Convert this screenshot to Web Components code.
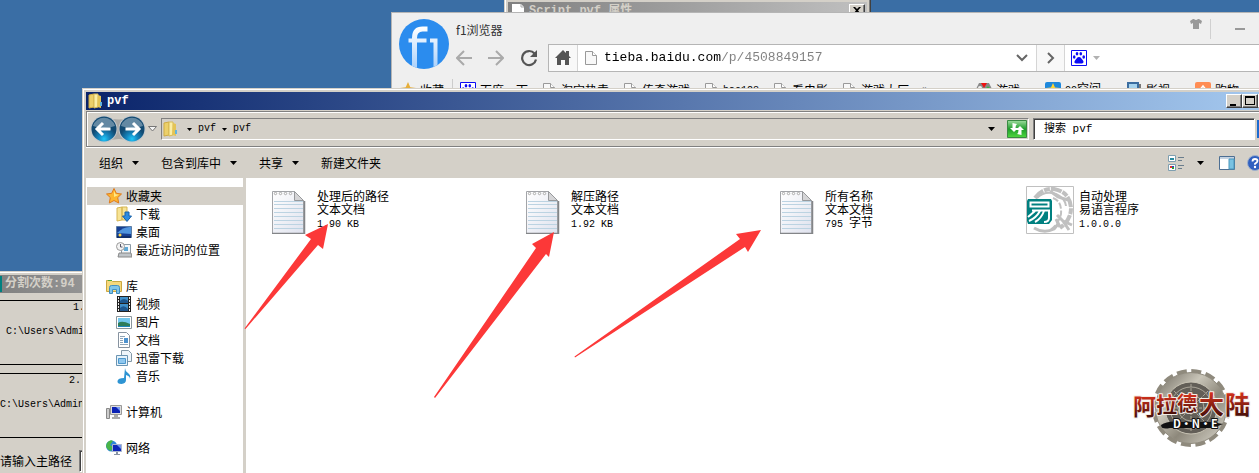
<!DOCTYPE html>
<html lang="zh-CN">
<head>
<meta charset="utf-8">
<title>pvf</title>
<style>
  html, body { height: 100%; margin: 0; }
  body {
    --face: #d4d0c8;
    --mono: "Liberation Mono", "Noto Sans CJK SC", monospace;
    overflow: hidden;
    font: 12px/18px "Noto Sans CJK SC", sans-serif;
    color: #000;
  }
</style>
</head>
<body>
<desk-top></desk-top>

<script>
const page = '<path d="M2.5 1.5h7l4 4v9h-11z" fill="#f8f8f8" stroke="#999"/><path d="M9.5 1.5v4h4" fill="#fff" stroke="#999"/>';

// every icon: [viewBox width, viewBox height, svg markup]
const ICONS = {
  page: [16, 16, page],
  script: [16, 16, '<path d="M2 1h9l3 3v11H2z" fill="#fff"/><path d="M11 1v3h3" fill="none" stroke="#aaa"/>'],
  f1: [50, 50, `<defs><linearGradient id="w" gradientUnits="userSpaceOnUse" x1="0" y1="8" x2="0" y2="50"><stop offset="0" stop-color="#fff"/><stop offset="1" stop-color="#a9d0fb"/></linearGradient><clipPath id="c"><circle cx="25" cy="25" r="25"/></clipPath></defs>
    <circle cx="25" cy="25" r="25" fill="#2b8cee"/><g clip-path="url(#c)" fill="none" stroke="url(#w)" stroke-width="5"><path d="M15.500 50V19q0-9 8-9h5"/><path d="M9.500 21.500h18M31 21.500h5.500V50" stroke-width="4"/></g>`],
  back: [16, 16, '<path d="M8 1 1 8l7 7M1 8h15" fill="none" stroke="#aaa" stroke-width="2"/>'],
  forward: [16, 16, '<path d="m8 1 7 7-7 7M15 8H0" fill="none" stroke="#aaa" stroke-width="2"/>'],
  reload: [18, 18, '<path d="M14.500 4.500a7 7 0 1 0 1.500 6" fill="none" stroke="#555" stroke-width="2.200"/><path d="M17 1v7h-7z" fill="#555"/>'],
  home: [16, 16, '<path d="M8 0 0 8h2v7h4v-5h4v5h4V8h2l-2-2V1h-3v2z" fill="#555"/>'],
  down: [12, 8, '<path d="m1 1 5 5 5-5" fill="none" stroke="#666" stroke-width="2"/>'],
  right: [8, 12, '<path d="m1 1 5 5-5 5" fill="none" stroke="#666" stroke-width="2"/>'],
  shirt: [12, 10, '<path d="M0 2 3 0h1q2 2 4 0h1l3 2-1 3-2-1v6H3V4L1 5z" fill="#999"/>'],
  line: [10, 2, '<path d="M0 0h10v2H0z" fill="#999"/>'],
  baidu: [16, 16, '<path d="M.500.500h15v15H.500z" fill="#fff" stroke="#0b0bf5"/><path d="M8 7c2 0 2.500 2 4 3.500 1.500 2-.5 3.500-2 3H6c-2 .5-3.500-1-2-3C5.500 9 6 7 8 7z" fill="#0b0bf5"/><g fill="#0b0bf5"><ellipse cx="3.200" cy="7" rx="1.300" ry="1.700"/><ellipse cx="6" cy="3.800" rx="1.300" ry="1.800"/><ellipse cx="9.800" cy="3.800" rx="1.300" ry="1.800"/><ellipse cx="12.700" cy="7" rx="1.300" ry="1.700"/></g>'],
  star: [16, 16, '<path d="m8 .5 2.300 4.800 5.200.7-3.800 3.600 1 5.400L8 12.500 3.300 15l1-5.400L.500 6l5.200-.7z" fill="#fdb62f" stroke="#e07b1c"/><path d="m8 3 1.500 3.300 3.500.5L8 9z" fill="#ffe98a"/>'],
  goldstar: [16, 16, '<path d="m8 0 2.300 5.300 5.700.7-4.300 3.600 1.300 5.900-5-3-5 3 1.300-5.900L0 6l5.700-.7z" fill="#e6ae3a"/>'],
  game: [16, 16, '<path d="M3 1h10l3 6v7l-4-3H4l-4 3V7z" fill="#888"/><path d="M5 1h6L8 6z" fill="#e11"/><circle cx="4" cy="6" r="2" fill="#eee"/><circle cx="12" cy="6" r="1.500" fill="#3b4"/>'],
  qq: [16, 16, '<rect width="16" height="16" rx="2" fill="#1e88dc"/><path d="m8 1 2 4.500 5 .5-4 3 1 5-4-2.500L4 14l1-5-4-3 5-.5z" fill="#ffd633"/>'],
  film: [16, 16, '<path d="M1 0h12v15H1z" fill="#3b6da0"/><path d="M3 2h8v9H3z" fill="#a6d3ee"/><path d="M13 2h2v13h-2z" fill="#777"/>'],
  shop: [16, 16, '<rect width="16" height="16" rx="2" fill="#ff8d54"/><path d="m4 9 4-5 4 5v4H4z" fill="none" stroke="#fff" stroke-width="1.500"/>'],
  folder: [16, 16, '<path d="m1 2 5-1v13l-5 1z" fill="#ecd06a" stroke="#d0ad45"/><path d="M6 1h4v13l-4 1z" fill="#fbeea6" stroke="#d8bb56"/><path d="m10 2 3 1v12l-4-1z" fill="#e4c456"/><path d="M12 9h2v4h-2z" fill="#61b4df"/>'],
  tri: [7, 4, '<path d="M0 0h7L3.500 4z"/>'],
  smalltri: [5, 3, '<path d="M0 0h5L2.500 3z"/>'],
  history: [9, 6, '<path d="M.5.500h8L4.500 5z" fill="#f4f4f4" stroke="#777"/>'],
  orbs: [58, 28, `<defs><radialGradient id="o" cy=".9"><stop offset="0" stop-color="#20c8fa"/><stop offset=".45" stop-color="#1585bd"/><stop offset="1" stop-color="#124a72"/></radialGradient></defs>
    <path d="M14 2q15 5 30 0v25q-15-6-30 0z" fill="#aaa9a6"/><circle cx="14" cy="14" r="13.500" fill="#c5c8cb"/><circle cx="42" cy="14" r="13.500" fill="#c5c8cb"/><circle cx="14" cy="14" r="12.500" fill="url(#o)"/><circle cx="42" cy="14" r="12.500" fill="url(#o)"/>
    <path d="M3 11a11.500 11.500 0 0 1 22 0q-11 4-22 0zM31 11a11.500 11.500 0 0 1 22 0q-11 4-22 0z" fill="#fff" opacity=".35"/>
    <path d="m13 8-6 6 6 6M7 14h13.500M43 8l6 6-6 6m6-6H35.500" fill="none" stroke="#fff" stroke-width="3"/>`],
  refresh: [20, 18, '<defs><linearGradient id="g" x1="0" y1="0" x2="0" y2="1"><stop offset="0" stop-color="#9fdc9f"/><stop offset=".5" stop-color="#1f9d2b"/><stop offset="1" stop-color="#4fd83f"/></linearGradient></defs><path d="M.5.500h19v17H.500z" fill="url(#g)" stroke="#3a8a43"/><path d="M5.500 3v5H3l4 4 4-4H8.500q0-3 1.500-4zM14.500 15v-5H17l-4-4-4 4h2.500q0 3-1.500 4z" fill="#fff"/>'],
  search: [16, 18, '<path d="M0 0h16v18H0z" fill="#1c6bd0"/>'],
  view: [16, 16, '<g fill="#fff" stroke="#7f9fb0"><path d="M.5.500h7v6h-7zM.5 9.500h7v6h-7z"/></g><path d="M2 3h4v2H2z" fill="#2a8ba0"/><path d="M2 11h2v2H2z" fill="#d33"/><path d="M4 12h2v2H4z" fill="#2a9a3a"/><path d="M4 11h2v1H4z" fill="#33c"/><path d="M10 2.500h6M10 5.500h4M10 10.500h6M10 13.500h4" stroke="#6a7d8c"/>'],
  pane: [16, 14, '<path d="M.5.500h15v13H.500z" fill="#fff" stroke="#4d6f93"/><path d="M1 1h14v2H1z" fill="#c5d3e2"/><path d="M10 3h5v10h-5z" fill="#79c2e2" stroke="#4a97bc"/>'],
  help: [16, 16, '<circle cx="8" cy="8" r="7.500" fill="#3060c0" stroke="#9fb0cc"/><path d="M5.500 6.500q0-2.500 2.500-2.500t2.500 2q0 1.300-2.500 2.700v1" fill="none" stroke="#fff" stroke-width="1.800"/><circle cx="8" cy="12" r="1.200" fill="#fff"/>'],
  downloads: [16, 16, '<path d="m1 2 5-1v13l-5 1zM6 1h5v13H6z" fill="#f7e394" stroke="#d5b552"/><path d="M9 6h4v4h2.500L11 15.500 6.500 10H9z" fill="#2c8be0" stroke="#1660a8"/>'],
  desktop: [16, 16, '<path d="M.5 2.500h15v11H.500z" fill="#173f92" stroke="#5c7da4"/><path d="M1 9q7-7 14-6v7z" fill="#4f94dd"/><path d="M1 12h14v2H1z" fill="#102f6b"/><circle cx="4" cy="11" r="1.500" fill="#ffd84a"/>'],
  recent: [16, 16, '<path d="M5.500 2.500h9v9h-9z" fill="#f3f7fa" stroke="#8d9aa4"/><path d="M8 5h4v4H8z" fill="#5fa9d6"/><path d="m3 11 12 0 1 4H2z" fill="#bfc4c8" stroke="#888"/><circle cx="4.500" cy="4.500" r="4" fill="#f3f3f3" stroke="#999"/><path d="M4.500 2v3h2" fill="none" stroke="#556"/>'],
  library: [16, 16, '<path d="M.5 2.500h5l1 1h9v10H.500z" fill="#f5d97c" stroke="#cba741"/><path d="M2 2h4v1H2z" fill="#4fa83b"/><path d="M3.500 15.500v-6q0-2 2-2h6q2 0 2 2v6h-3v-4h-4v4z" fill="#7fc5ea" stroke="#438fc0"/>'],
  video: [16, 16, '<path d="M1 0h14v16H1z" fill="#222"/><path d="M4 1h8v6H4zM4 8h8v7H4z" fill="#3f8fca"/><path d="M4 5q4-4 8 0v2H4zM4 12q4-4 8 1v2H4z" fill="#1d568e"/><path d="M2.500 1v15M13.500 1v15" stroke="#eee" stroke-dasharray="2 1"/>'],
  picture: [16, 16, '<path d="M.5 2.500h15v12H.500z" fill="#fff" stroke="#8a969c"/><path d="M2 4h12v9H2z" fill="#73c8ee"/><path d="M2 9q4-3 12 1v3H2z" fill="#2e7d5b"/><path d="M2 12h12v1H2z" fill="#1d86bd"/>'],
  doc: [16, 16, '<path d="M2.500.500h8l3 3v12h-11z" fill="#fff" stroke="#8793a0"/><path d="M4 4.500h5M4 6.500h3M4 8.500h3M4 10.500h3M4 12.500h8" stroke="#8fa5b8"/><path d="M8 6h4v5H8z" fill="#4d92cf"/>'],
  thunder: [16, 16, '<path d="M5.500.500h7l3 3v8h-10z" fill="#eef5fa" stroke="#8398a7"/><path d="M.5 5.500h11v10H.500z" fill="#e6f3fb" stroke="#6b94b2"/><path d="M2.500 8.500h7v5h-7z" fill="#8ec7ef" stroke="#4c97cc"/>'],
  music: [16, 16, '<path d="M9 0q0 3 3 5t2 6q0-3-4-4v5q0 3.500-4.500 4Q1 16 1.500 13T8 10z" fill="#2e94d3"/>'],
  computer: [16, 16, '<path d="M.5 4.500h3v10h-3z" fill="#ccc" stroke="#888"/><path d="M4.500 1.500h11v9h-11z" fill="#ddd" stroke="#999"/><path d="M6 3h8v6H6z" fill="#0b22b5"/><path d="M10 3h4v4z" fill="#7b9cf2"/><path d="M8 11h4v2h2v2H6v-2h2z" fill="#aaa"/>'],
  network: [16, 16, '<circle cx="5.500" cy="6" r="5.500" fill="#2d86d9"/><path d="M1 3q3-4 6-2L4 5l3 2-2 4Q1 10 0 6z" fill="#4ab548"/><path d="M6.500 4.500h9v7h-9z" fill="#0d27b8" stroke="#a8b4cc"/><path d="M11 5h4v4z" fill="#6f93ee"/><path d="M10 12h2v2h2v1H8v-1h2z" fill="#8894a4"/>'],
  notepad: [48, 48, `<defs><linearGradient id="n" x1="0" y1="0" x2="1" y2="1"><stop offset="0" stop-color="#fff"/><stop offset="1" stop-color="#dfe2ee"/></linearGradient></defs>
    <path d="M8.500 5.500h22l9 9v33h-31z" fill="url(#n)" stroke="#a2a4a8"/><path d="M8 47.500h32.500V15" fill="none" stroke="#838588" stroke-width="1.500"/>
    <path d="M10 15.500h29M10 18.500h29M10 22.500h29M10 26.500h29M10 30.500h29M10 34.500h29M10 38.500h29M10 42.500h29" stroke="#bcd3e2"/>
    <path d="M30.500 5.500v9h9z" fill="#d5d5d7" stroke="#97999c"/><g fill="#fff" stroke="#aaa"><circle cx="11.500" cy="7.500" r="1.200"/><circle cx="16.500" cy="7.500" r="1.200"/><circle cx="21.500" cy="7.500" r="1.200"/><circle cx="26.500" cy="7.500" r="1.200"/></g>`],
  yi: [48, 48, `<path d="M.5.500h47v47H.500z" fill="#fff" stroke="#c0c0c0"/>
    <g fill="none" stroke="#c0c0c0"><path d="M9 12Q16 2 28 3q16 3 17 19 0 12-11 20" stroke-width="4" stroke-dasharray="11 1 6 1"/><path d="M11 12q8-8 19-4 9 4 10 12" stroke-width="2"/><path d="M27 12q9 3 8 16-3 11-11 16" stroke-width="2" stroke-dasharray="6 2"/><path d="M8 42q10 6 20 1l5-6M31 29l6 6 9 4M24 5l8 6 10 3M37 35l6 9M30 33l4 8" stroke-width="3"/></g>
    <path d="M2 13h23l1 2v19l-3 4H2l-1-3V15z" fill="#008080"/><path d="M4.500 16.500h18v4h-18zM6 24.500h18M9 25l-7 6M14 25q-4 7-11 10M18 25q-3 8-9 11M23 25v7q0 4-5 4" fill="none" stroke="#fff" stroke-width="2"/>`],
};

class UiIcon extends HTMLElement {
  connectedCallback() {
    this.attachShadow({ mode: 'open' });
    const [w, h, art] = ICONS[this.getAttribute('name')];
    this.shadowRoot.innerHTML = `
      <style>
        :host { display: inline-flex; flex: none; }
        svg { display: block; }
      </style>
      <svg width="${w}" height="${h}" viewBox="0 0 ${w} ${h}" aria-hidden="true">${art}</svg>`;
  }
}

// Small raised caption button
class CaptionButton extends HTMLElement {
  connectedCallback() {
    this.attachShadow({ mode: 'open' });
    const marks = {
      min: '<path d="M3 9h6v2H3z"/>',
      max: '<path d="M2 1h10v9H2zM3 3v6h8V3z" fill-rule="evenodd"/>',
      close: '<path d="M3 2h2l2 2 2-2h2L8 5.500 11 9H9L7 7 5 9H3l3-3.500z"/>',
    };
    const kind = this.getAttribute('kind');
    this.shadowRoot.innerHTML = `
      <style>
        :host { display: block; flex: none; }
        button {
          display: block; width: 16px; height: 14px; padding: 0;
          background: var(--face);
          border: 1px solid; border-color: #fff #404040 #404040 #fff;
          box-shadow: inset -1px -1px #808080;
        }
        svg { display: block; }
      </style>
      <button aria-label="${kind}"><svg width="14" height="12">${marks[kind]}</svg></button>`;
  }
}

// Classic window frame: caption on top, slotted body below
class ClassicWindow extends HTMLElement {
  connectedCallback() {
    this.attachShadow({ mode: 'open' });
    this.shadowRoot.innerHTML = `
      <style>
        :host {
          --from: #808080; --to: #c0c0c0; --caption: #d4d0c8;
          display: flex; flex-direction: column; box-sizing: border-box;
          padding: 3px; background: var(--face);
          border: 1px solid; border-color: var(--face) #404040 #404040 var(--face);
          box-shadow: inset 1px 1px #fff, inset -1px -1px #808080;
        }
        :host([active]) { --from: #0a246a; --to: #a6caf0; --caption: #fff; }
        header {
          display: flex; align-items: center; gap: 3px; flex: none;
          height: 18px; padding: 0 2px;
          background: linear-gradient(to right, var(--from), var(--to));
          color: var(--caption); font: bold 12px/18px var(--mono);
        }
        h1 { flex: 1; margin: 0; font: inherit; white-space: nowrap; }
        .buttons { display: flex; }
      </style>
      <header><slot name="icon"></slot><h1>${this.getAttribute('caption')}</h1><div class="buttons"><slot name="buttons"></slot></div></header>
      <slot></slot>`;
  }
}

class WebBrowser extends HTMLElement {
  connectedCallback() {
    this.attachShadow({ mode: 'open' });
    const mark = ([icon, text]) => `<a href="#"><ui-icon name="${icon}"></ui-icon><span>${text}</span></a>`;
    const left = [['baidu', '百度一下'], ['page', '淘宝热卖'], ['page', '传奇游戏'], ['page', '<i>hao123</i>'], ['page', '看电影'], ['page', '游戏大厅']];
    const right = [['game', '游戏'], ['qq', '<i>QQ</i>空间'], ['film', '影视'], ['shop', '购物']];
    this.shadowRoot.innerHTML = `
      <style>
        :host { display: block; background: #efefef; border: 1px solid #b5b5b5; box-sizing: border-box; }
        button { display: flex; align-items: center; justify-content: center; padding: 0; border: 0; background: none; }
        .top { display: flex; gap: 7px; padding: 6px 0 0 7px; }
        .main { flex: 1; display: flex; flex-direction: column; }
        .title { display: flex; align-items: flex-start; height: 25px; color: #333; }
        .title span { flex: 1; padding-top: 2px; }
        .title .min { margin-left: 8px; padding: 0 33px 0 24px; height: 20px; border-left: 1px solid #d0d0d0; box-sizing: border-box; }
        .nav { display: flex; align-items: center; }
        .arrows { display: flex; align-items: center; gap: 16px; width: 92px; }
        .address { flex: 1; display: flex; height: 28px; box-sizing: border-box; border: 1px solid #b5b5b5; background: #fff; }
        .address > button { width: 29px; background: #f8f8f8; border: 0 solid #d5d5d5; }
        .address .home { border-right-width: 1px; }
        .address .go { border-width: 0 1px; }
        label { flex: 1; display: flex; align-items: center; gap: 5px; padding: 0 8px 0 5px; }
        input {
          flex: 1; min-width: 0; height: 24px; padding: 0; border: 0; outline: 0;
          font: 13px/24px var(--mono); color: #808080;
          background: linear-gradient(to right, #000 15ch, #808080 15ch);
          -webkit-background-clip: text; background-clip: text; -webkit-text-fill-color: transparent;
        }
        .engine { display: flex; align-items: center; gap: 6px; width: 206px; padding-left: 6px; }
        .engine ui-icon + ui-icon { opacity: .3; }
        .marks { display: flex; gap: 13px; padding: 7px 39px 0 8px; line-height: 18px; }
        .marks a { display: flex; align-items: center; gap: 4px; color: #000; text-decoration: none; white-space: nowrap; }
        .marks .fav { padding-right: 8px; border-right: 1px solid #ccc; margin-right: -6px; }
        .marks .more { flex: 1; color: #666; }
        .right { display: flex; gap: 25px; }
        i { font: 10px/18px var(--mono); }
      </style>
      <div class="top">
        <ui-icon name="f1"></ui-icon>
        <div class="main">
          <div class="title">
            <span>f1浏览器</span>
            <button aria-label="皮肤"><ui-icon name="shirt"></ui-icon></button>
            <button class="min" aria-label="最小化"><ui-icon name="line"></ui-icon></button>
          </div>
          <div class="nav">
            <div class="arrows">
              <button aria-label="后退"><ui-icon name="back"></ui-icon></button>
              <button aria-label="前进"><ui-icon name="forward"></ui-icon></button>
              <button aria-label="刷新"><ui-icon name="reload"></ui-icon></button>
            </div>
            <div class="address">
              <button class="home" aria-label="主页"><ui-icon name="home"></ui-icon></button>
              <label><ui-icon name="page"></ui-icon><input aria-label="地址" value="tieba.baidu.com/p/4508849157"><ui-icon name="down"></ui-icon></label>
              <button class="go" aria-label="转到"><ui-icon name="right"></ui-icon></button>
              <div class="engine"><ui-icon name="baidu"></ui-icon><ui-icon name="tri"></ui-icon></div>
            </div>
          </div>
        </div>
      </div>
      <nav class="marks">
        <a class="fav" href="#"><ui-icon name="goldstar"></ui-icon>收藏</a>
        ${left.map(mark).join('')}
        <span class="more">»</span>
        <div class="right">${right.map(mark).join('')}</div>
      </nav>`;
  }
}

class SplitTool extends HTMLElement {
  connectedCallback() {
    this.attachShadow({ mode: 'open' });
    this.shadowRoot.innerHTML = `
      <style>
        :host { flex: 1; display: flex; flex-direction: column; gap: 8px; padding-top: 7px; font: 10px/14px var(--mono); }
        section { height: 65px; box-sizing: border-box; border: 1px solid #000; padding: 0 0 0 77px; }
        p { margin: 0 0 10px; }
        .path { margin-left: -67px; }
        .second { padding-left: 73px; }
        .second .path { margin-left: -69px; }
        label { display: flex; align-items: center; gap: 7px; margin-top: 4px; margin-left: 5px; font: 12px/20px "Noto Sans CJK SC", sans-serif; }
        input { width: 120px; height: 22px; box-sizing: border-box; border: 1px solid; border-color: #808080 #fff #fff #808080; box-shadow: inset 1px 1px #404040; }
      </style>
      <section><p>1.</p><p class="path">C:\\Users\\Admi</p></section>
      <section class="second"><p>2.</p><p class="path">C:\\Users\\Admin</p></section>
      <label>请输入主路径<input></label>`;
  }
}

class ExplorerBars extends HTMLElement {
  connectedCallback() {
    this.attachShadow({ mode: 'open' });
    const tri = '<ui-icon name="tri"></ui-icon>';
    this.shadowRoot.innerHTML = `
      <style>
        :host { display: block; flex: none; padding-top: 1px; }
        button { display: flex; align-items: center; gap: 9px; padding: 0; border: 0; background: none; font: inherit; color: #000; white-space: nowrap; }
        .nav {
          display: flex; align-items: center; height: 36px; box-sizing: border-box; padding: 0 3px;
          border: 1px solid #808080; border-right: 0; box-shadow: inset 1px 1px #fff, 0 1px #fff;
        }
        .history { margin-right: 4px; }
        .crumbs, .find { display: flex; align-items: center; height: 22px; box-sizing: border-box; border: 1px solid; border-color: #808080 #fff #fff #808080; }
        .crumbs { flex: 1; gap: 6px; padding: 0 1px; font: 10px/18px var(--mono); }
        .crumbs ui-icon[name=folder] { margin-right: 2px; }
        .space { flex: 1; }
        .crumbs .drop { margin-right: 6px; }
        .find { width: 222px; margin: 0 2px 0 4px; background: #fff; box-shadow: inset 1px 1px #404040; }
        input { flex: 1; min-width: 0; height: 18px; padding: 0 10px; border: 0; outline: 0; background: none; font: 11px/18px var(--mono); color: #000; }
        input::placeholder { color: #000; opacity: 1; }
        .tools { display: flex; align-items: center; gap: 22px; height: 31px; padding: 0 13px; }
        .tools .view { gap: 13px; margin-right: -7px; }
        .tools .help { margin-left: -10px; }
      </style>
      <div class="nav">
        <button aria-label="后退和前进"><ui-icon name="orbs"></ui-icon></button>
        <button class="history" aria-label="最近的页面"><ui-icon name="history"></ui-icon></button>
        <div class="crumbs">
          <ui-icon name="folder"></ui-icon>
          <ui-icon name="smalltri"></ui-icon><button>pvf</button>
          <ui-icon name="smalltri"></ui-icon><button>pvf</button>
          <span class="space"></span>
          <button class="drop" aria-label="上一个位置">${tri}</button>
          <button aria-label="刷新"><ui-icon name="refresh"></ui-icon></button>
        </div>
        <div class="find"><input type="text" aria-label="搜索" placeholder="搜索 pvf"></div>
        <button aria-label="开始搜索"><ui-icon name="search"></ui-icon></button>
      </div>
      <div class="tools">
        <button>组织${tri}</button>
        <button>包含到库中${tri}</button>
        <button>共享${tri}</button>
        <button>新建文件夹</button>
        <span class="space"></span>
        <button class="view" aria-label="更改视图"><ui-icon name="view"></ui-icon>${tri}</button>
        <button aria-label="预览窗格"><ui-icon name="pane"></ui-icon></button>
        <button class="help" aria-label="帮助"><ui-icon name="help"></ui-icon></button>
      </div>`;
  }
}

class FolderTree extends HTMLElement {
  connectedCallback() {
    this.attachShadow({ mode: 'open' });
    const groups = [
      ['star', '收藏夹', [['downloads', '下载'], ['desktop', '桌面'], ['recent', '最近访问的位置']]],
      ['library', '库', [['video', '视频'], ['picture', '图片'], ['doc', '文档'], ['thunder', '迅雷下载'], ['music', '音乐']]],
      ['computer', '计算机', []],
      ['network', '网络', []],
    ];
    const row = (icon, text) => `<a href="#"><ui-icon name="${icon}"></ui-icon>${text}</a>`;
    this.shadowRoot.innerHTML = `
      <style>
        :host { display: block; flex: none; width: 157px; padding-top: 9px; background: #fff; border-right: 3px solid var(--face); }
        ul { list-style: none; margin: 0; padding: 0; }
        .group { margin-bottom: 18px; }
        a { display: flex; align-items: center; gap: 4px; height: 18px; padding-left: 20px; color: #000; text-decoration: none; }
        ul ul a { padding-left: 30px; }
        .group:first-child > a { background: var(--face); margin-left: 1px; padding-left: 19px; }
      </style>
      <ul>${groups.map(([icon, text, kids]) => `<li class="group">${row(icon, text)}<ul>${kids.map((k) => `<li>${row(...k)}</li>`).join('')}</ul></li>`).join('')}</ul>`;
  }
}

class FileTile extends HTMLElement {
  connectedCallback() {
    this.attachShadow({ mode: 'open' });
    const size = this.getAttribute('size').replace(/[\x20-\x7e]+/, '<span>$&</span>');
    this.shadowRoot.innerHTML = `
      <style>
        :host { display: flex; gap: 5px; height: 48px; line-height: 13px; white-space: nowrap; }
        div { padding-top: 3px; }
        p { margin: 0; height: 13px; }
        p span { font: 10px/13px var(--mono); white-space: pre; }
      </style>
      <ui-icon name="${this.getAttribute('icon')}"></ui-icon>
      <div><p><slot></slot></p><p>${this.getAttribute('kind')}</p><p>${size}</p></div>`;
  }
}

// Red pointers drawn over the desktop
class RedArrows extends HTMLElement {
  connectedCallback() {
    this.attachShadow({ mode: 'open' });
    this.shadowRoot.innerHTML = `
      <style>:host { display: block; pointer-events: none; } svg { display: block; }</style>
      <svg width="800" height="400" fill="#fc3838" aria-hidden="true">
        <path d="m328 224-23 11 6 4-66.500 89.500 1 .5L318 245l5 4z"/>
        <path d="m554 232-22 12 4 4-102 149 1 1L546 254l3 3z"/>
        <path d="m761 230-25 4 4 5-165.500 117.500.5 1L745 247l3 5z"/>
      </svg>`;
  }
}

class GearBadge extends HTMLElement {
  connectedCallback() {
    this.attachShadow({ mode: 'open' });
    this.shadowRoot.innerHTML = `
      <style>
        :host { display: block; }
        svg { display: block; }
        text { font-family: "Noto Sans CJK SC", sans-serif; font-weight: 700; paint-order: stroke; stroke-linejoin: round; }
      </style>
      <svg width="122" height="80" viewBox="0 0 122 80">
        <defs>
          <linearGradient id="m" x1="0" y1="0" x2="1" y2="1"><stop offset="0" stop-color="#69645a"/><stop offset=".35" stop-color="#c9c5b8"/><stop offset=".6" stop-color="#8d887b"/><stop offset="1" stop-color="#dedbd0"/></linearGradient>
          <linearGradient id="r" x1="0" y1="0" x2="0" y2="1"><stop offset=".2" stop-color="#d8321c"/><stop offset="1" stop-color="#2a0704"/></linearGradient>
        </defs>
        <circle cx="59" cy="40" r="37" fill="none" stroke="#8f8a7d" stroke-width="4" stroke-dasharray="10 4.530"/>
        <circle cx="59" cy="40" r="35.500" fill="url(#m)" stroke="#8f8a7d"/>
        <circle cx="59" cy="40" r="26" fill="#625e57" stroke="#c8c3b4"/>
        <g fill="none" stroke="#aaa598"><circle cx="59" cy="40" r="21"/><circle cx="59" cy="40" r="13"/><path d="M59 16v48M35 40h48M42 23l34 34M76 23 42 57" stroke-dasharray="3 1"/></g>
        <g fill="url(#r)" stroke="#f4eee6" stroke-width="2">
          <text x="1" y="47" font-size="23">阿</text><text x="24" y="44" font-size="21">拉</text><text x="45" y="43" font-size="20">德</text><text x="67" y="46" font-size="25">大</text><text x="93" y="46" font-size="25">陆</text>
        </g>
        <path d="M29 57q7-5 20-3h30l12 2-10 4H38q-9 2-9-3z" fill="#111"/>
        <text x="41" y="60" font-size="11" fill="#fff" stroke="#111" stroke-width="2">D·N·E</text>
      </svg>`;
  }
}

class DeskTop extends HTMLElement {
  connectedCallback() {
    this.attachShadow({ mode: 'open' });
    this.shadowRoot.innerHTML = `
      <style>
        :host { display: block; position: relative; height: 100%; overflow: hidden; background: #3a6ea5; }
        .props, .split, web-browser, .explorer, red-arrows, gear-badge { position: absolute; }
        .props { left: 504px; top: -2px; width: 367px; height: 120px; }
        .split { left: -9px; top: 271px; width: 300px; bottom: -20px; }
        web-browser { left: 391px; top: 12px; right: -20px; height: 120px; }
        .explorer { left: 82px; top: 88px; right: -21px; bottom: -6px; }
        red-arrows { left: 0; top: 0; }
        gear-badge { right: 5px; bottom: 25px; }
        .teal { width: 5px; height: 16px; background: #008080; }
        .body { flex: 1; display: flex; min-height: 0; }
        .files {
          flex: 1; display: grid; grid-template-columns: repeat(auto-fill, 244px); column-gap: 10px;
          align-content: start; padding: 8px 0 0 18px; background: #fff;
        }
      </style>
      <classic-window class="props" caption="Script.pvf 属性">
        <ui-icon slot="icon" name="script"></ui-icon>
        <caption-button slot="buttons" kind="close"></caption-button>
      </classic-window>
      <classic-window class="split" caption="分割次数:94">
        <span slot="icon" class="teal"></span>
        <split-tool></split-tool>
      </classic-window>
      <web-browser></web-browser>
      <classic-window class="explorer" caption="pvf" active>
        <ui-icon slot="icon" name="folder"></ui-icon>
        <caption-button slot="buttons" kind="min"></caption-button>
        <caption-button slot="buttons" kind="max"></caption-button>
        <caption-button slot="buttons" kind="close"></caption-button>
        <explorer-bars></explorer-bars>
        <div class="body">
          <folder-tree></folder-tree>
          <div class="files">
            <file-tile icon="notepad" kind="文本文档" size="1.90 KB">处理后的路径</file-tile>
            <file-tile icon="notepad" kind="文本文档" size="1.92 KB">解压路径</file-tile>
            <file-tile icon="notepad" kind="文本文档" size="795 字节">所有名称</file-tile>
            <file-tile icon="yi" kind="易语言程序" size="1.0.0.0">自动处理</file-tile>
          </div>
        </div>
      </classic-window>
      <red-arrows></red-arrows>
      <gear-badge></gear-badge>`;
  }
}

customElements.define('ui-icon', UiIcon);
customElements.define('caption-button', CaptionButton);
customElements.define('classic-window', ClassicWindow);
customElements.define('web-browser', WebBrowser);
customElements.define('split-tool', SplitTool);
customElements.define('explorer-bars', ExplorerBars);
customElements.define('folder-tree', FolderTree);
customElements.define('file-tile', FileTile);
customElements.define('red-arrows', RedArrows);
customElements.define('gear-badge', GearBadge);
customElements.define('desk-top', DeskTop);
</script>
</body>
</html>
